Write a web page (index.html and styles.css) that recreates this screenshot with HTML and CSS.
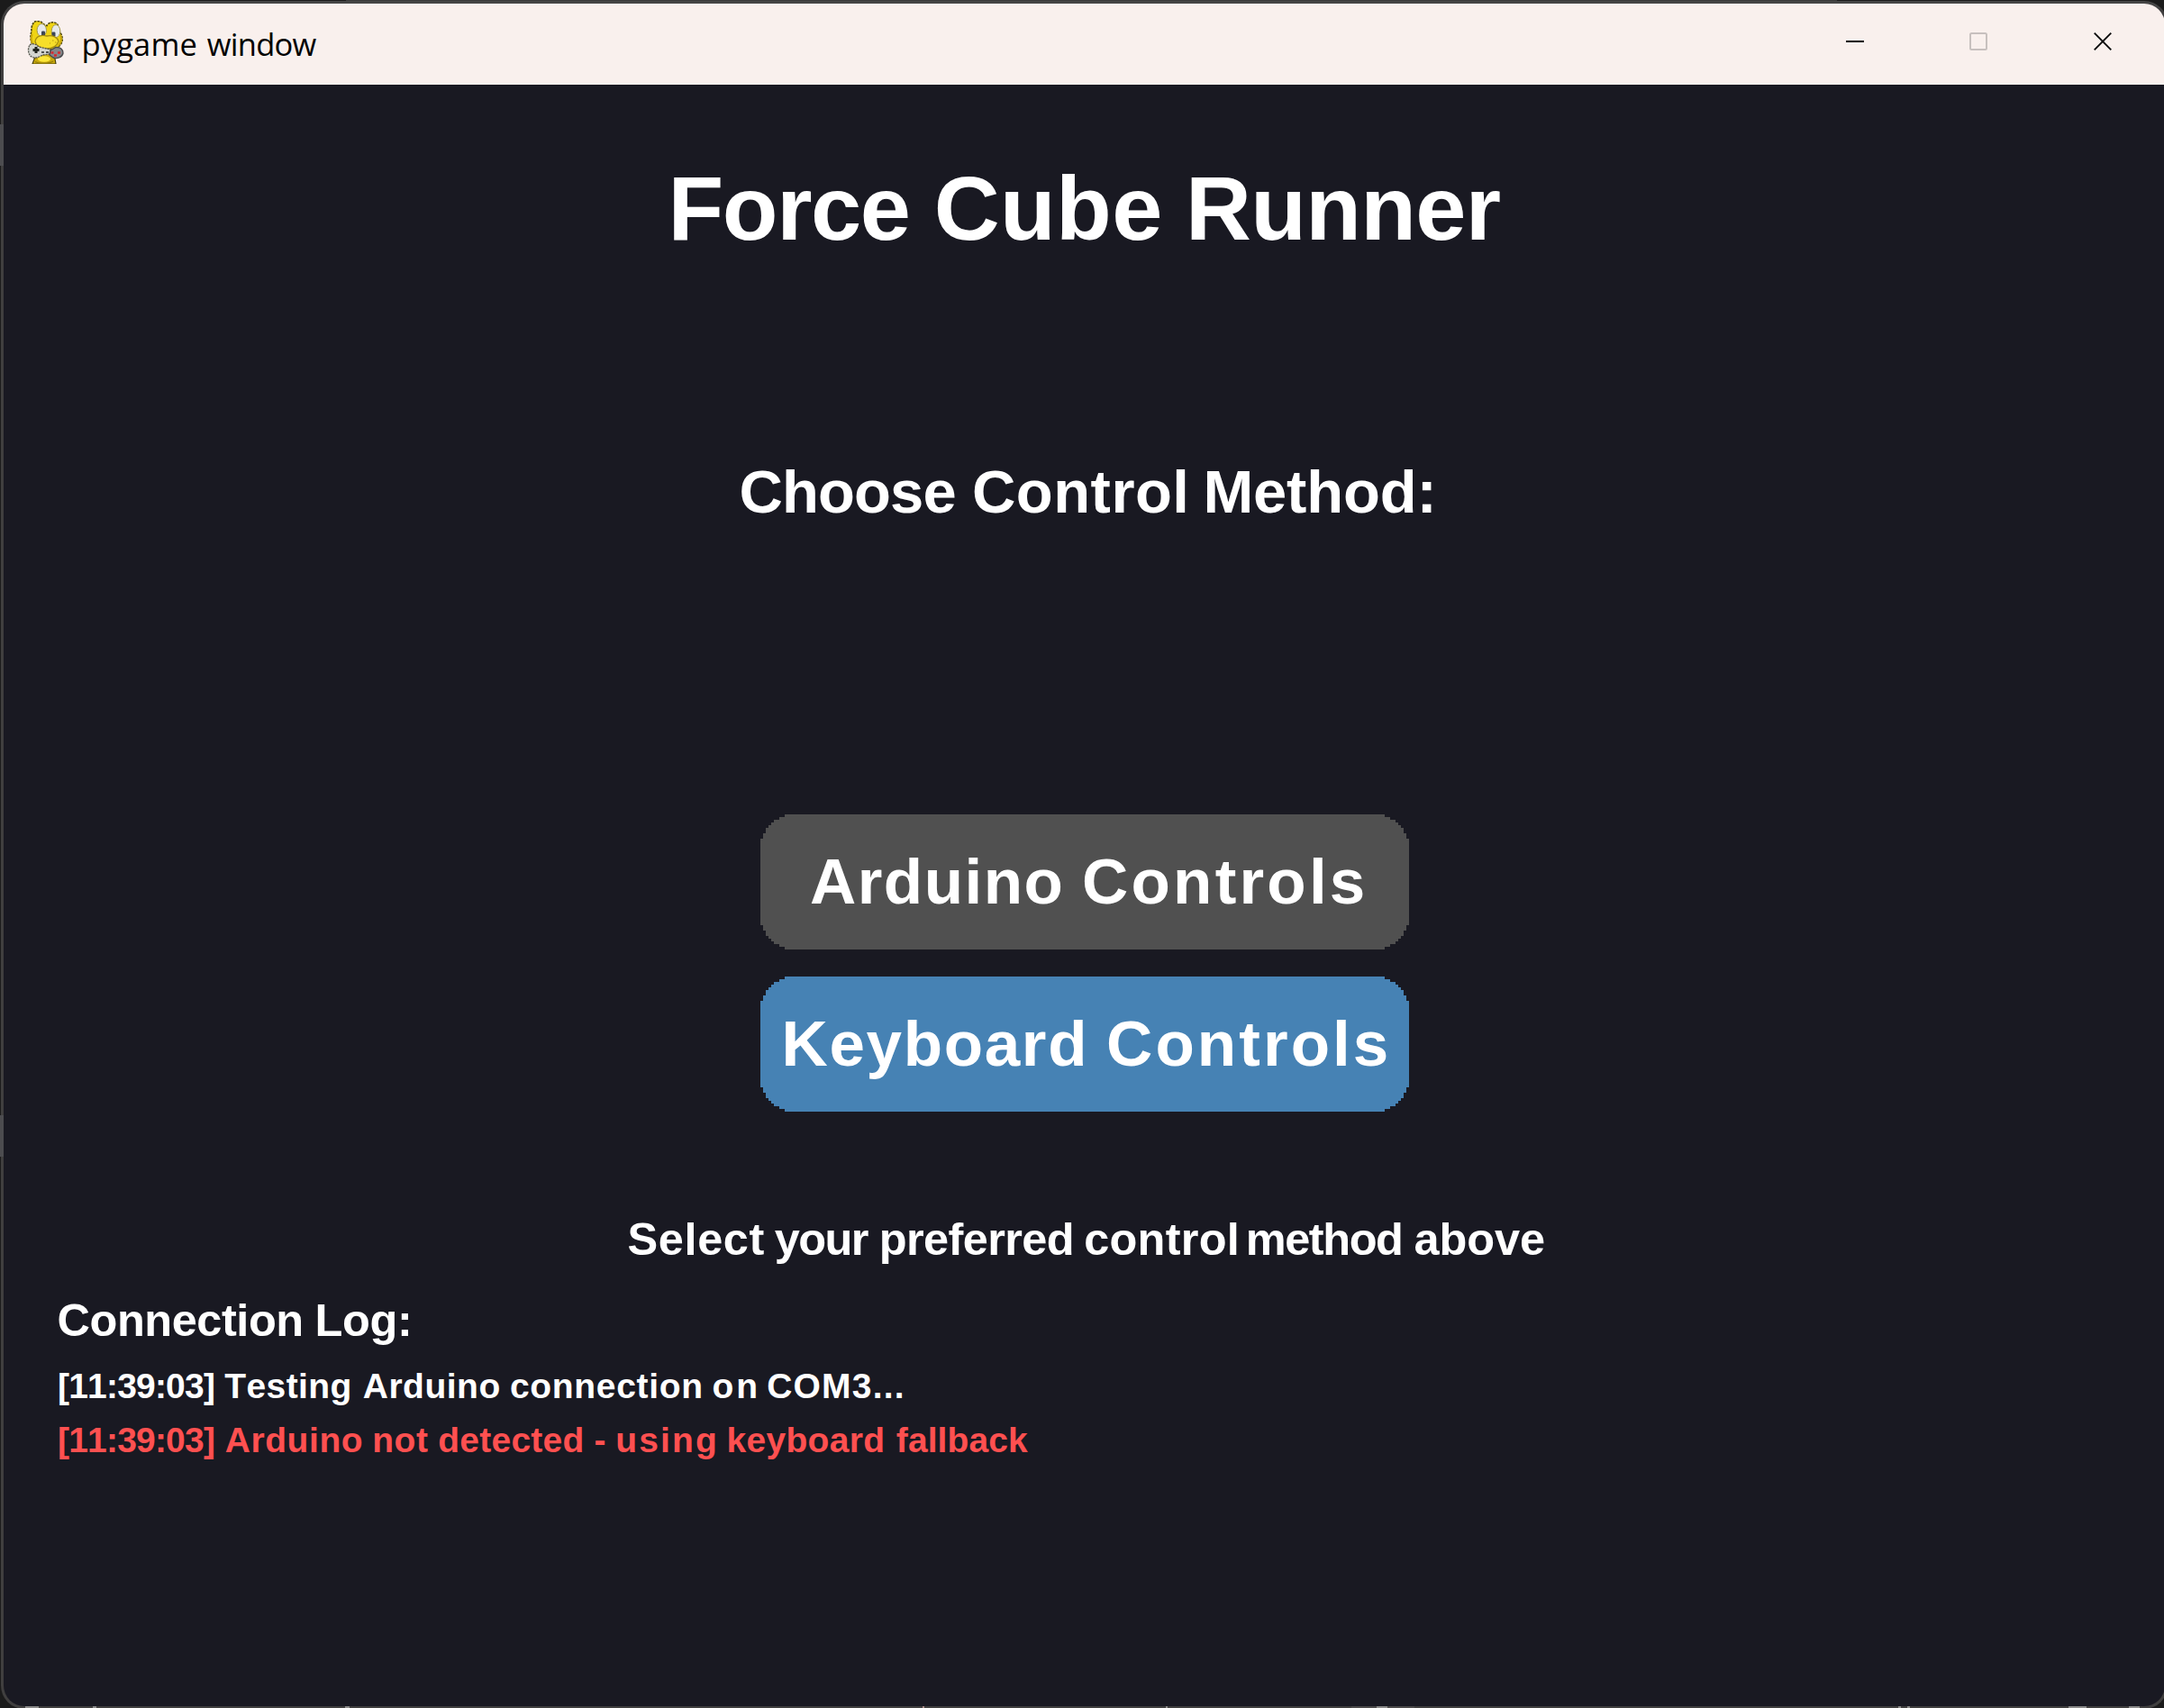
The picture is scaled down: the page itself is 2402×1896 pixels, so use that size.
FILE: index.html
```
<!DOCTYPE html>
<html lang="en">
<head>
<meta charset="utf-8">
<title>pygame window</title>
<link rel="stylesheet" href="styles.css">
</head>
<body>
<main class="window">
  <header class="titlebar">
    <svg class="app-icon" width="48" height="48" viewBox="0 0 48 48">
      <path d="M8 48 L11 40 L10 34 H34 L33 42 L34 48 Z" fill="#c9a90c" stroke="#4a430c" stroke-width="1.2"/>
      <path d="M10 1.500 C13 -.5 18 0 20.500 4 L24 5.500 C26 1.500 33 0 36 4.500 C37 8 37.500 11 39.500 14 C42 19 42 24 38 28 L33 32 H13 L9 28 C6 24 5 17 7 12 C6.500 8 7.500 4 10 1.500 Z" fill="#efd414" stroke="#4c450f" stroke-width="1.600" stroke-dasharray="2.600 1"/>
      <path d="M7.500 15 C6 20 7 25 10 28 M39 16 C41 20 40 25 36.500 28" fill="none" stroke="#c9a70a" stroke-width="2"/>
      <ellipse cx="18.300" cy="10.500" rx="5.200" ry="7" fill="#e6e9ea" stroke="#a59a4a" stroke-width="1"/>
      <ellipse cx="34" cy="11.500" rx="4.800" ry="7" fill="#e6e9ea" stroke="#a59a4a" stroke-width="1"/>
      <rect x="18" y="11.500" width="4" height="5" rx="1.200" fill="#3d4655"/>
      <rect x="29.500" y="12.500" width="4" height="5" rx="1.200" fill="#3d4655"/>
      <path d="M11 23 C12 17 18 15.500 24 17 C31 15.500 36 19 37 23 C35 28 30 31 24 31 C17 31 12 28 11 23 Z" fill="#f6de2a" stroke="#a58c10" stroke-width="1.300"/>
      <path d="M30 22 h1.500 M33 24 h1.500 M27 25 h1" stroke="#b89a12" stroke-width="1.200"/>
      <path d="M5 27 C8 24.500 12 26 15 29 L28 32 V37 L19 38 C15 42 7 42 5 38 C3 35 3 30 5 27 Z" fill="#d3d5d0" stroke="#55574f" stroke-width="1.400" stroke-dasharray="2 1"/>
      <path d="M12 29 v7 M8.500 32.500 h7" stroke="#20241f" stroke-width="3"/>
      <path d="M18 35 h3 M23 35 h3" stroke="#50534f" stroke-width="1.800"/>
      <path d="M28 33 L34 29.500 C39 29 42 32 42 36 C41 41 35 42.500 31 41 L27 38 Z" fill="#858688" stroke="#4a4b4e" stroke-width="1.400"/>
      <path d="M28.500 35.500 h3 M32 38.500 h3 M36 35.500 h3" stroke="#d62a30" stroke-width="2.400"/>
      <ellipse cx="21" cy="42.500" rx="7" ry="3.200" fill="#fbe63a"/>
      <path d="M11 45.500 C15 48 26 48 31 45" fill="none" stroke="#8f7b0d" stroke-width="1.400"/>
    </svg>
    <span class="caption">pygame <span class="cap-2">window</span></span>
    <div class="controls">
      <svg class="minimize" width="20" height="20" viewBox="0 0 20 20"><path d="M0 10 H20" stroke="#000" stroke-width="2"/></svg>
      <svg width="20" height="20" viewBox="0 0 20 20"><rect x="1" y="1" width="18" height="18" rx="1.500" fill="none" stroke="#c7c0be" stroke-width="2"/></svg>
      <svg width="20" height="20" viewBox="0 0 20 20"><path d="M.7 .7 L19.300 19.300 M19.300 .7 L.7 19.300" stroke="#0c0c0c" stroke-width="1.900"/></svg>
    </div>
  </header>
  <section class="screen">
    <h1 class="title"><span class="t1">Force</span> <span class="t2">Cube</span> <span class="t3">Runner</span></h1>
    <h2 class="prompt"><span class="p1">Choose</span> <span class="p2">Control</span> <span class="p3">Method:</span></h2>
    <div class="choices">
      <button class="choice choice-arduino"><span class="a1">Arduino</span> <span class="a2">Controls</span></button>
      <button class="choice choice-keyboard"><span class="k1">Keyboard</span> <span class="k2">Controls</span></button>
    </div>
    <p class="hint"><span class="h1">Select</span> <span class="h2">your</span> <span class="h3">preferred</span> <span class="h4">control</span> <span class="h5">method</span> <span class="h6">above</span></p>
    <h3 class="log-title"><span class="c1">Connection</span> <span class="c2">Log:</span></h3>
    <div class="log">
      <p class="entry"><span class="stamp">[11:39:03]</span> <span class="e1">Testing</span> <span class="e2">Arduino</span> <span class="e3">connection</span> <span class="e4">on</span> <span class="e5">COM3...</span></p>
      <p class="entry entry-error"><span class="stamp">[11:39:03]</span> <span class="f1">Arduino</span> <span class="f2">not</span> <span class="f3">detected</span> <span>-</span> <span class="f4">using</span> <span class="f5">keyboard</span> <span class="f6">fallback</span></p>
    </div>
  </section>
</main>
<i class="edge edge-a"></i>
<i class="edge edge-b"></i>
<i class="edge-top"></i>
<svg class="behind" width="2402" height="2" viewBox="0 0 2402 2">
  <path d="M1500 1 H1570" stroke="#4c4b4b" stroke-width="2"/>
  <path d="M28 1 H43 M103 1 h4 M383 1 h5 M1294 1 h2 M1528 1 h12 M2107 1 h3 M2117 1 h3 M2296 1 h20 M2363 1 h12" stroke="#8b8a8a" stroke-width="2"/>
  <path d="M1024 1 h2" stroke="#a98a86" stroke-width="2"/>
</svg>
</body>
</html>
```
FILE: styles.css
```
* { box-sizing: border-box; }
body {
  margin: 0;
  width: 2402px;
  height: 1896px;
  padding: 1px 0 0 1px;
  overflow: hidden;
  position: relative;
  background: #1b1b1b;
  font-family: "Liberation Sans", Arial, sans-serif;
}
h1, h2, h3, p { margin: 0; font-weight: 700; white-space: nowrap; }

.window {
  width: 2405px;
  height: 1896px;
  border: 3px solid #403f3f;
  border-top-color: #454545;
  border-radius: 26px;
  overflow: hidden;
  background: #191922;
}
.titlebar {
  display: flex;
  align-items: center;
  width: 2398px;
  height: 90px;
  padding: 0 58px 0 24px;
  background: #f9f0ed;
}
.app-icon { margin: 0 14.500px 4px 0; }
.caption {
  font: 400 34.5px/90px "Open Sans", "Segoe UI", sans-serif;
  letter-spacing: .15px;
  color: #000;
  white-space: nowrap;
}
.cap-2 { letter-spacing: -.73px; margin-left: 1.600px; }
.controls {
  display: flex;
  gap: 118px;
  margin: 0 0 6px auto;
}
.controls svg { display: block; }
.controls .minimize { margin-right: -1px; }

.screen {
  width: 2398px;
  padding-top: 77px;
  color: #fff;
  font-kerning: none;
}
.title { padding-left: 737.5px; font-size: 101px; line-height: 120px; }
.t1 { letter-spacing: -1.38px; }
.t2 { letter-spacing: .38px; margin-left: -1px; }
.t3 { letter-spacing: -.68px; margin-left: -2.9px; }

.prompt { margin-top: 215px; padding-left: 816.5px; font-size: 67px; line-height: 80px; }
.p1 { letter-spacing: -.91px; }
.p2 { letter-spacing: .47px; margin-left: -.4px; }
.p3 { letter-spacing: -.17px; margin-left: -3.7px; }

.choices {
  display: grid;
  gap: 30px;
  width: 720px;
  margin: 318px 0 0 840px;
}
.choice {
  height: 150px;
  padding: 0 0 0 55px;
  border: 0;
  color: #fff;
  font: 700 71px/150px "Liberation Sans", Arial, sans-serif;
  font-kerning: none;
  text-align: left;
  white-space: nowrap;
  /* corners step in whole 3px game pixels */
  clip-path: polygon(
    27px 0, 693px 0, 693px 3px, 699px 3px, 699px 6px, 705px 6px, 705px 9px, 708px 9px, 708px 12px, 711px 12px, 711px 15px, 714px 15px, 714px 21px, 717px 21px, 717px 27px, 720px 27px,
    720px 123px, 717px 123px, 717px 129px, 714px 129px, 714px 135px, 711px 135px, 711px 138px, 708px 138px, 708px 141px, 705px 141px, 705px 144px, 699px 144px, 699px 147px, 693px 147px, 693px 150px,
    27px 150px, 27px 147px, 21px 147px, 21px 144px, 15px 144px, 15px 141px, 12px 141px, 12px 138px, 9px 138px, 9px 135px, 6px 135px, 6px 129px, 3px 129px, 3px 123px, 0 123px,
    0 27px, 3px 27px, 3px 21px, 6px 21px, 6px 15px, 9px 15px, 9px 12px, 12px 12px, 12px 9px, 15px 9px, 15px 6px, 21px 6px, 21px 3px, 27px 3px);
}
.choice-arduino { background: #505050; }
.choice-keyboard { padding-left: 23.5px; background: #4682b4; }
.a1 { letter-spacing: 1.48px; }
.a2 { letter-spacing: 3.2px; margin-left: -.2px; }
.k1 { letter-spacing: 1.65px; }
.k2 { letter-spacing: 3.05px; margin-left: .2px; }

.hint { margin-top: 112px; padding-left: 692.5px; font-size: 50.5px; line-height: 60px; }
.h1 { letter-spacing: .62px; }
.h2 { letter-spacing: -1.63px; margin-left: -3.3px; }
.h3 { letter-spacing: -.59px; margin-left: -1px; }
.h4 { letter-spacing: .25px; margin-left: -3px; }
.h5 { letter-spacing: -1.42px; margin-left: -7.4px; }
.h6 { letter-spacing: -.06px; margin-left: -1.1px; }

.log-title { margin-top: 30px; padding-left: 59.5px; font-size: 50.5px; line-height: 60px; }
.c1 { letter-spacing: -.45px; }
.c2 { letter-spacing: -.3px; margin-left: -1.4px; }

.log { margin-top: 13px; padding-left: 60px; font-size: 39px; line-height: 60px; }
.entry-error { color: #ff5050; }
.stamp { letter-spacing: -.8px; }
.e1 { letter-spacing: .4px; margin-left: .3px; }
.e2 { letter-spacing: .5px; margin-left: 1.2px; }
.e3 { letter-spacing: .7px; margin-left: -.7px; }
.e4 { letter-spacing: 2.76px; margin-left: -1.2px; }
.e5 { letter-spacing: 1.2px; margin-left: -3.4px; }
.f1 { letter-spacing: .6px; margin-left: .7px; }
.f2 { letter-spacing: .5px; margin-left: -.9px; }
.f3 { letter-spacing: .25px; }
.f4 { letter-spacing: 2.1px; }
.f5 { letter-spacing: .3px; margin-left: -2.2px; }
.f6 { letter-spacing: .08px; margin-left: 1.7px; }

/* slivers of the desktop showing through the window frame */
.edge { position: absolute; left: 0; width: 4px; height: 46px; background: #4c4c4f; }
.edge-a { top: 138px; }
.edge-b { top: 1238px; }
.edge-top { position: absolute; left: 384px; top: 0; width: 1655px; height: 1px; background: #3a3a3a; }
.behind { position: absolute; left: 0; bottom: 0; display: block; }
```
